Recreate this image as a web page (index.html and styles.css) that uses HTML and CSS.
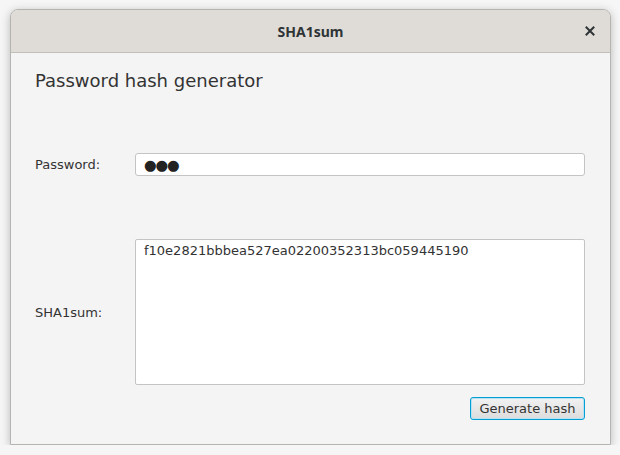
FILE: index.html
```html
<!DOCTYPE html>
<html>
<head>
<meta charset="utf-8">
<link rel="stylesheet" href="styles.css">
</head>
<body>
<div class="window">
  <div class="titlebar">
    <span class="title">SHA1sum</span>
    <span class="close"><svg width="10" height="10" viewBox="0 0 10 10"><path d="M1.5 1.5L8.5 8.5M8.5 1.5L1.5 8.5" stroke="#2e3436" stroke-width="2" stroke-linecap="square"/></svg></span>
  </div>
  <div class="content">
    <h1 class="heading">Password hash generator</h1>
    <div class="row pw-row">
      <label class="label">Password:</label>
      <div class="field"><span class="dots">●●●</span></div>
    </div>
    <div class="row sum-row">
      <label class="label">SHA1sum:</label>
      <div class="area">f10e2821bbbea527ea02200352313bc059445190</div>
    </div>
    <div class="actions">
      <button class="btn">Generate hash</button>
    </div>
  </div>
</div>
</body>
</html>
```
FILE: styles.css
```css
html, body {
  margin: 0;
  padding: 0;
  background: #f6f6f6;
  font-family: "DejaVu Sans", "Noto Sans", sans-serif;
}
.window {
  margin: 9px 9px 0 10px;
  width: 601px;
  height: 436px;
  box-sizing: border-box;
  border: 1px solid #b6b4b0;
  border-radius: 8px 8px 0 0;
  background: #f4f4f4;
  box-shadow: 0 2px 10px rgba(0,0,0,0.25);
  display: flex;
  flex-direction: column;
  overflow: hidden;
}
.titlebar {
  height: 42px;
  flex: none;
  background: #dfdcd8;
  border-bottom: 1px solid #c2beb9;
  display: flex;
  align-items: center;
  justify-content: center;
  position: relative;
}
.title {
  font-family: "Noto Sans", "DejaVu Sans", sans-serif;
  font-weight: bold;
  font-size: 14px;
  color: #2e3436;
}
.close {
  position: absolute;
  right: 15px;
  top: 16px;
  width: 10px;
  height: 10px;
  display: block;
}
.close svg { display: block; }
.content {
  flex: 1;
  padding: 16px 25px 0 24px;
  display: flex;
  flex-direction: column;
  color: #333;
}
.heading {
  margin: 0;
  font-weight: normal;
  font-size: 18px;
  line-height: 24px;
  color: #333;
}
.row {
  display: grid;
  grid-template-columns: 100px 1fr;
  align-items: center;
}
.pw-row { margin-top: 60px; }
.sum-row { margin-top: 63px; }
.label {
  font-size: 13px;
  color: #333;
}
.field {
  height: 23px;
  box-sizing: border-box;
  background: #fff;
  border: 1px solid #c4c4c4;
  border-radius: 3px;
  padding: 0 8px;
  display: flex;
  align-items: center;
}
.dots {
  font-size: 14.5px;
  letter-spacing: -1.2px;
  color: #222;
  line-height: 20px;
}
.area {
  height: 146px;
  box-sizing: border-box;
  background: #fff;
  border: 1px solid #c4c4c4;
  border-radius: 2px;
  padding: 3px 8px;
  font-size: 13px;
  line-height: 16px;
  color: #333;
}
.actions {
  margin-top: 12px;
  display: flex;
  justify-content: flex-end;
}
.btn {
  width: 115px;
  height: 23px;
  box-sizing: border-box;
  border: 1px solid #039ed3;
  box-shadow: inset 0 0 0 1px #b8e2f2;
  border-radius: 3px;
  background: linear-gradient(#f2f2f2, #dcdcdc);
  font-family: "DejaVu Sans", sans-serif;
  font-size: 13px;
  color: #333;
  padding: 0;
}
```
